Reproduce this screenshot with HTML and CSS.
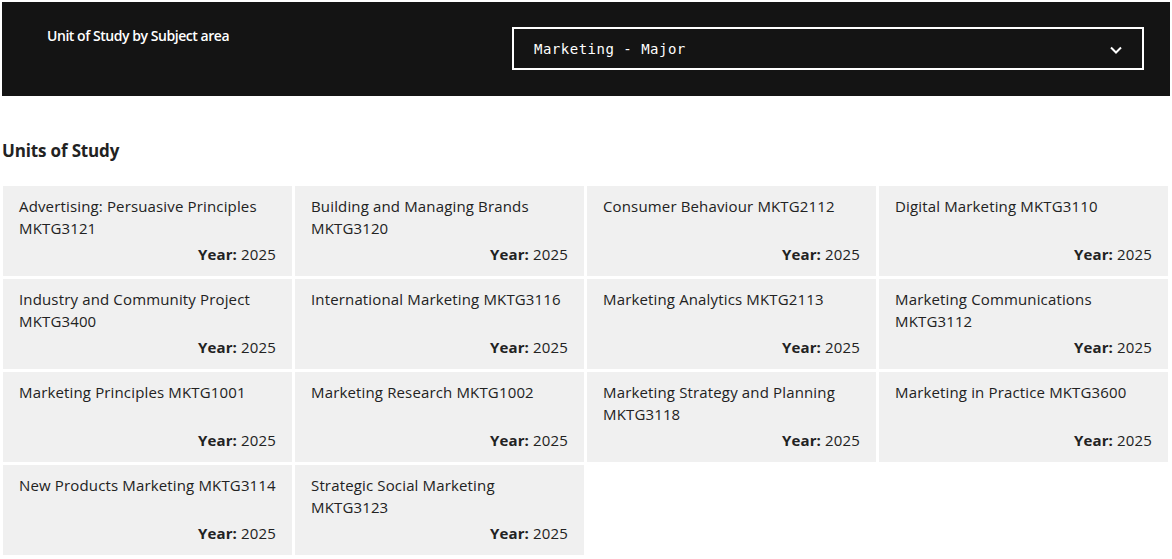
FILE: index.html
```html
<!DOCTYPE html><html><head><meta charset="utf-8">
<meta name="viewport" content="initial-scale=1.0, width=device-width">
<title>Units of Study</title>
<link rel="stylesheet" href="styles.css">
</head>
<body>

<div class="filter">
  <div class="filter-label">Unit of Study by Subject area</div>
  <div class="select">
    <span>Marketing - Major</span>
    <svg class="chev" width="12" height="8" viewBox="0 0 12 8"><path d="M1 1.5 L6 6.5 L11 1.5" /></svg>
  </div>
</div>

<h2>Units of Study</h2>

<div class="units">
  <div class="unit"><div class="name">Advertising: Persuasive Principles MKTG3121</div><div class="year"><b>Year:</b> 2025</div></div>
  <div class="unit"><div class="name">Building and Managing Brands MKTG3120</div><div class="year"><b>Year:</b> 2025</div></div>
  <div class="unit"><div class="name">Consumer Behaviour MKTG2112</div><div class="year"><b>Year:</b> 2025</div></div>
  <div class="unit"><div class="name">Digital Marketing MKTG3110</div><div class="year"><b>Year:</b> 2025</div></div>
  <div class="unit"><div class="name">Industry and Community Project MKTG3400</div><div class="year"><b>Year:</b> 2025</div></div>
  <div class="unit"><div class="name">International Marketing MKTG3116</div><div class="year"><b>Year:</b> 2025</div></div>
  <div class="unit"><div class="name">Marketing Analytics MKTG2113</div><div class="year"><b>Year:</b> 2025</div></div>
  <div class="unit"><div class="name">Marketing Communications MKTG3112</div><div class="year"><b>Year:</b> 2025</div></div>
  <div class="unit"><div class="name">Marketing Principles MKTG1001</div><div class="year"><b>Year:</b> 2025</div></div>
  <div class="unit"><div class="name">Marketing Research MKTG1002</div><div class="year"><b>Year:</b> 2025</div></div>
  <div class="unit"><div class="name">Marketing Strategy and Planning MKTG3118</div><div class="year"><b>Year:</b> 2025</div></div>
  <div class="unit"><div class="name">Marketing in Practice MKTG3600</div><div class="year"><b>Year:</b> 2025</div></div>
  <div class="unit"><div class="name">New Products Marketing MKTG3114</div><div class="year"><b>Year:</b> 2025</div></div>
  <div class="unit"><div class="name">Strategic Social Marketing MKTG3123</div><div class="year"><b>Year:</b> 2025</div></div>
</div>

</body>
</html>
```

FILE: styles.css
```css
html,body,div,h2{margin:0;padding:0;}
*{box-sizing:border-box;}
body{
  color:#222;
  font-family:"Open Sans","Liberation Sans",sans-serif;
  font-size:15px;
  background:#fff;
  margin:2px;
}
.filter{
  display:flex;
  align-items:flex-start;
  background:#141414;
  color:#fff;
  height:94px;
  padding:25px 26px 0 45px;
}
.filter-label{
  flex:1;
  font-size:14px;
  font-weight:600;
  line-height:18px;
  letter-spacing:-0.45px;
}
.select{
  width:632px;
  height:43px;
  border:2px solid #fff;
  display:flex;
  align-items:center;
  justify-content:space-between;
  padding:0 20px;
  font-family:"DejaVu Sans Mono","Liberation Mono",monospace;
  font-size:14px;
  letter-spacing:0.5px;
}
.chev{fill:none;stroke:#fff;stroke-width:2;margin-top:3px;margin-right:0;}
h2{
  font-size:17px;
  font-weight:700;
  line-height:22px;
  margin:44px 0 24px 0;
  letter-spacing:-0.15px;
}
.units{
  display:grid;
  grid-template-columns:repeat(4,289px);
  gap:3px;
  margin:0 1px;
}
.unit{
  background:#f0f0f0;
  height:90px;
  padding:9px 16px 11px 16px;
  display:flex;
  flex-direction:column;
  line-height:22px;
  letter-spacing:0.15px;
}
.name{flex:1;}
.year{text-align:right;}
.year b{font-weight:700;}
```
